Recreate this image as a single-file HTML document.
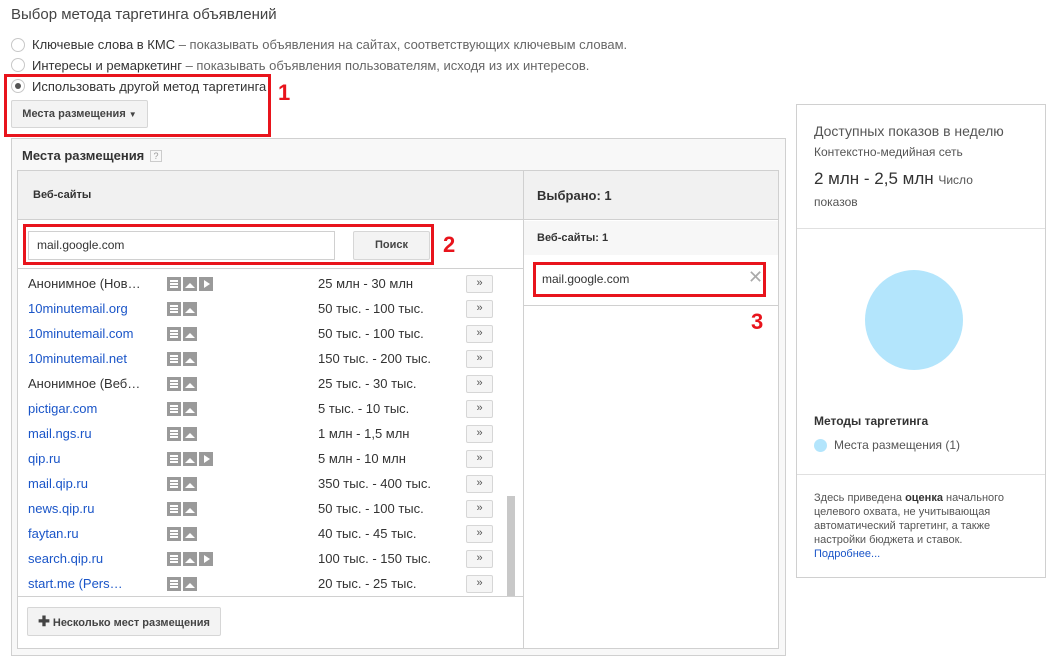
<!DOCTYPE html>
<html><head><meta charset="utf-8"><style>
*{box-sizing:border-box;margin:0;padding:0}
body{width:1054px;height:661px;background:#fff;font-family:"Liberation Sans",Arial,sans-serif;color:#333;font-size:13px;position:relative;overflow:hidden}
.a{position:absolute;white-space:nowrap}
.radio{position:absolute;width:14px;height:14px;border:1px solid #c8c8c8;border-radius:50%;background:#fff}
.g{color:#666}
.btn{position:absolute;background:#f3f3f3;border:1px solid #d6d6d6;border-radius:2px;font-weight:bold;font-size:11px;color:#444;text-align:center}
.red{position:absolute;border:3px solid #e8141c}
.num{position:absolute;color:#e8141c;font-weight:bold;font-size:22px}
.row{position:absolute;left:28px;font-size:13px;height:25px;line-height:25px;width:470px}
.row .n{position:absolute;left:0;color:#1a55c8}
.row .n.k{color:#333}
.row .ic{position:absolute;left:139px;top:6px}
.row .ic i{display:inline-block;width:14px;height:14px;background:#9a9a9a;margin-right:2px;vertical-align:top;position:relative}
.row .r{position:absolute;left:290px}
.row .b{position:absolute;left:438px;top:4px;width:27px;height:18px;border:1px solid #d6d6d6;background:#f5f5f5;font-size:11px;line-height:15px;text-align:center;color:#555;border-radius:2px}
.tx::before{content:"";position:absolute;left:3px;top:3px;width:8px;height:2px;background:#fff;box-shadow:0 3px 0 #fff,0 6px 0 #fff}
.im::before{content:"";position:absolute;left:2px;bottom:3px;border-left:5px solid transparent;border-right:5px solid transparent;border-bottom:5px solid #fff}
.vd::before{content:"";position:absolute;left:5px;top:3px;border-top:4px solid transparent;border-bottom:4px solid transparent;border-left:6px solid #fff}
</style></head><body>
<div class="a" style="left:11px;top:6px;font-size:15px;color:#444">Выбор метода таргетинга объявлений</div>
<div class="radio" style="left:11px;top:38px"></div>
<div class="a" style="left:32px;top:37px">Ключевые слова в КМС <span class="g">– показывать объявления на сайтах, соответствующих ключевым словам.</span></div>
<div class="radio" style="left:11px;top:58px"></div>
<div class="a" style="left:32px;top:58px">Интересы и ремаркетинг <span class="g">– показывать объявления пользователям, исходя из их интересов.</span></div>
<div class="radio" style="left:11px;top:79px"><div style="position:absolute;left:3px;top:3px;width:6px;height:6px;border-radius:50%;background:#555"></div></div>
<div class="a" style="left:32px;top:79px">Использовать другой метод таргетинга</div>
<div class="btn" style="left:11px;top:100px;width:137px;height:28px;line-height:26px">Места размещения <span style="font-size:8px">▼</span></div>
<div class="red" style="left:4px;top:74px;width:267px;height:63px"></div>
<div class="num" style="left:278px;top:80px">1</div>

<div style="position:absolute;left:11px;top:138px;width:775px;height:518px;border:1px solid #d0d0d0;background:#f8f8f8"></div>
<div class="a" style="left:22px;top:148px;font-weight:bold;font-size:13px">Места размещения</div>
<div class="a" style="left:150px;top:150px;width:12px;height:12px;border:1px solid #ccc;font-size:9px;color:#999;text-align:center;line-height:11px">?</div>
<div style="position:absolute;left:17px;top:170px;width:762px;height:479px;border:1px solid #d0d0d0;background:#fff"></div>
<div style="position:absolute;left:18px;top:171px;width:760px;height:49px;background:#f1f1f1;border-bottom:1px solid #d0d0d0"></div>
<div style="position:absolute;left:523px;top:171px;width:1px;height:477px;background:#d0d0d0"></div>
<div class="a" style="left:33px;top:189px;font-weight:bold;font-size:11px">Веб-сайты</div>
<div class="a" style="left:537px;top:188px;font-weight:bold;font-size:13px">Выбрано: 1</div>

<div style="position:absolute;left:18px;top:268px;width:505px;height:1px;background:#d0d0d0"></div>
<div style="position:absolute;left:28px;top:231px;width:307px;height:29px;border:1px solid #d0d0d0;background:#fff"></div>
<div class="a" style="left:37px;top:238px;font-size:12px">mail.google.com</div>
<div class="btn" style="left:353px;top:231px;width:77px;height:29px;line-height:27px">Поиск</div>
<div class="red" style="left:23px;top:224px;width:411px;height:41px"></div>
<div class="num" style="left:443px;top:232px">2</div>

<div class="row" style="top:271px"><span class="n k">Анонимное (Нов…</span><span class="ic"><i class="tx"></i><i class="im"></i><i class="vd"></i></span><span class="r">25 млн - 30 млн</span><span class="b">»</span></div>
<div class="row" style="top:296px"><span class="n">10minutemail.org</span><span class="ic"><i class="tx"></i><i class="im"></i></span><span class="r">50 тыс. - 100 тыс.</span><span class="b">»</span></div>
<div class="row" style="top:321px"><span class="n">10minutemail.com</span><span class="ic"><i class="tx"></i><i class="im"></i></span><span class="r">50 тыс. - 100 тыс.</span><span class="b">»</span></div>
<div class="row" style="top:346px"><span class="n">10minutemail.net</span><span class="ic"><i class="tx"></i><i class="im"></i></span><span class="r">150 тыс. - 200 тыс.</span><span class="b">»</span></div>
<div class="row" style="top:371px"><span class="n k">Анонимное (Веб…</span><span class="ic"><i class="tx"></i><i class="im"></i></span><span class="r">25 тыс. - 30 тыс.</span><span class="b">»</span></div>
<div class="row" style="top:396px"><span class="n">pictigar.com</span><span class="ic"><i class="tx"></i><i class="im"></i></span><span class="r">5 тыс. - 10 тыс.</span><span class="b">»</span></div>
<div class="row" style="top:421px"><span class="n">mail.ngs.ru</span><span class="ic"><i class="tx"></i><i class="im"></i></span><span class="r">1 млн - 1,5 млн</span><span class="b">»</span></div>
<div class="row" style="top:446px"><span class="n">qip.ru</span><span class="ic"><i class="tx"></i><i class="im"></i><i class="vd"></i></span><span class="r">5 млн - 10 млн</span><span class="b">»</span></div>
<div class="row" style="top:471px"><span class="n">mail.qip.ru</span><span class="ic"><i class="tx"></i><i class="im"></i></span><span class="r">350 тыс. - 400 тыс.</span><span class="b">»</span></div>
<div class="row" style="top:496px"><span class="n">news.qip.ru</span><span class="ic"><i class="tx"></i><i class="im"></i></span><span class="r">50 тыс. - 100 тыс.</span><span class="b">»</span></div>
<div class="row" style="top:521px"><span class="n">faytan.ru</span><span class="ic"><i class="tx"></i><i class="im"></i></span><span class="r">40 тыс. - 45 тыс.</span><span class="b">»</span></div>
<div class="row" style="top:546px"><span class="n">search.qip.ru</span><span class="ic"><i class="tx"></i><i class="im"></i><i class="vd"></i></span><span class="r">100 тыс. - 150 тыс.</span><span class="b">»</span></div>
<div class="row" style="top:571px"><span class="n">start.me (Pers…</span><span class="ic"><i class="tx"></i><i class="im"></i></span><span class="r">20 тыс. - 25 тыс.</span><span class="b">»</span></div>
<div style="position:absolute;left:507px;top:496px;width:8px;height:100px;background:#c8c8c8"></div>
<div style="position:absolute;left:18px;top:596px;width:505px;height:1px;background:#d0d0d0"></div>
<div class="btn" style="left:27px;top:607px;width:194px;height:29px;line-height:27px;font-size:11px"><span style="font-size:14px">✚</span> Несколько мест размещения</div>

<div style="position:absolute;left:524px;top:221px;width:254px;height:34px;background:#f7f7f7"></div>
<div class="a" style="left:537px;top:232px;font-weight:bold;font-size:11px">Веб-сайты: 1</div>
<div class="a" style="left:542px;top:272px;font-size:12px">mail.google.com</div>
<div class="a" style="left:748px;top:267px;font-size:18px;color:#aaa">✕</div>
<div class="red" style="left:533px;top:262px;width:233px;height:35px"></div>
<div style="position:absolute;left:524px;top:305px;width:254px;height:1px;background:#d0d0d0"></div>
<div class="num" style="left:751px;top:309px">3</div>

<div style="position:absolute;left:796px;top:104px;width:250px;height:474px;border:1px solid #d0d0d0;background:#fff"></div>
<div class="a" style="left:814px;top:123px;font-size:14px;color:#555">Доступных показов в неделю</div>
<div class="a" style="left:814px;top:145px;font-size:12px;color:#555">Контекстно-медийная сеть</div>
<div class="a" style="left:814px;top:169px;font-size:17px;color:#333">2 млн - 2,5 млн <span style="font-size:12px;color:#555">Число</span></div>
<div class="a" style="left:814px;top:195px;font-size:12px;color:#555">показов</div>
<div style="position:absolute;left:797px;top:228px;width:248px;height:1px;background:#e0e0e0"></div>
<div style="position:absolute;left:865px;top:270px;width:98px;height:100px;border-radius:50%;background:#b3e5fc"></div>
<div class="a" style="left:814px;top:414px;font-weight:bold;font-size:12px">Методы таргетинга</div>
<div style="position:absolute;left:814px;top:439px;width:13px;height:13px;border-radius:50%;background:#b3e5fc"></div>
<div class="a" style="left:834px;top:438px;font-size:12px;color:#555">Места размещения (1)</div>
<div style="position:absolute;left:797px;top:474px;width:248px;height:1px;background:#e0e0e0"></div>
<div class="a" style="left:814px;top:491px;font-size:11px;color:#555;line-height:14px;white-space:normal;width:225px">Здесь приведена <b style="color:#333">оценка</b> начального целевого охвата, не учитывающая автоматический таргетинг, а также настройки бюджета и ставок.<br><span style="color:#1a55c8">Подробнее...</span></div>
</body></html>
